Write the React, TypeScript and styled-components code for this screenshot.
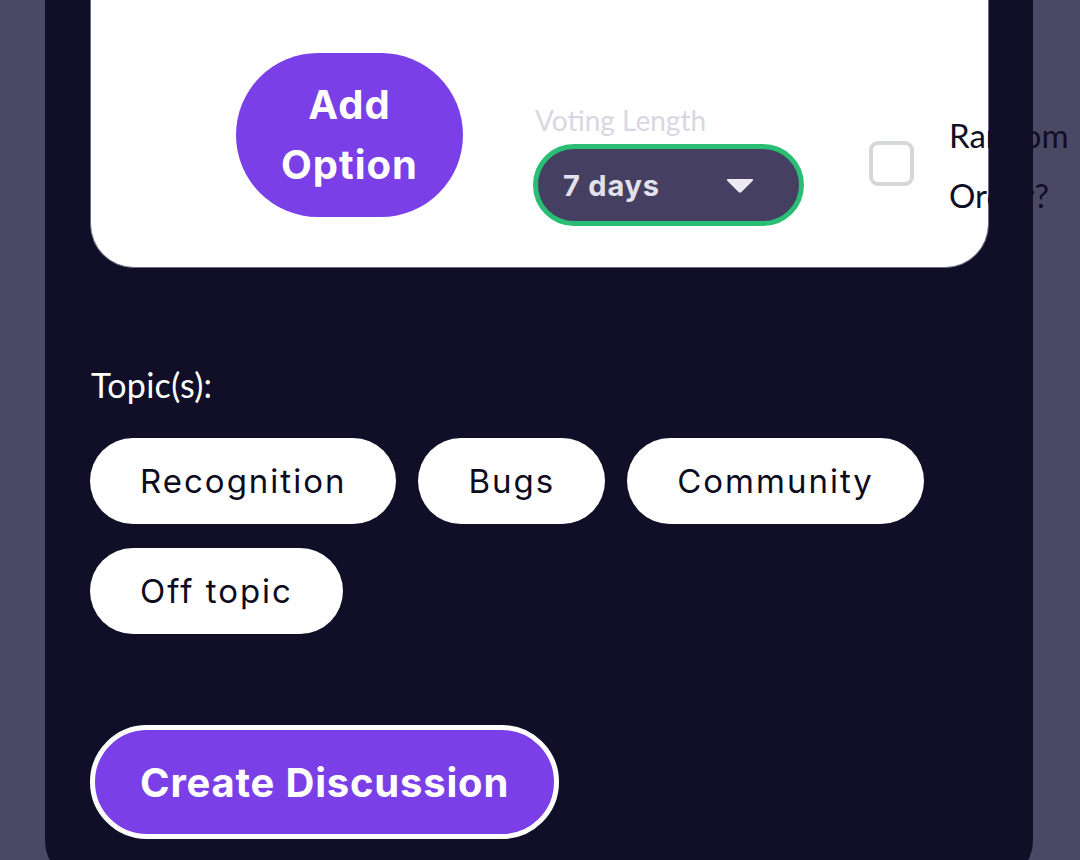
import React from "react";
import styled, { createGlobalStyle } from "styled-components";

const GlobalStyle = createGlobalStyle`
    html, body {
        margin: 0;
        padding: 0;
        background: #4b4866;
    }
    * {
        box-sizing: border-box;
    }
`;

const heading = `"Inter", "Noto Sans", sans-serif`;
const body = `"Lato", "Noto Sans", sans-serif`;

const Page = styled.div`
    height: 860px;
    overflow: hidden;
    background: #4b4866;
    padding: 0 47px 0 45px;
`;
const Panel = styled.main`
    min-height: 881px;
    background: #100f27;
    border-radius: 0 0 40px 40px;
    padding: 0 44px 0 45px;
`;
const Card = styled.section`
    height: 268px;
    background: #ffffff;
    border: 1px solid #6e6c82;
    border-top: none;
    border-radius: 0 0 44px 44px;
    display: flex;
    align-items: flex-start;
    padding-left: 145px;
`;
const AddBtn = styled.button`
    flex-shrink: 0;
    width: 227px;
    height: 164px;
    margin-top: 53px;
    border: none;
    border-radius: 82px;
    background: #7b3fe8;
    color: #ffffff;
    font-family: ${heading};
    font-size: 40px;
    font-weight: 700;
    letter-spacing: 1px;
    line-height: 60px;
    padding: 0;
`;
const VotingBox = styled.div`
    flex-shrink: 0;
    margin: 103px 0 0 70px;
    display: flex;
    flex-direction: column;
`;
const VotingLabel = styled.label`
    font-family: ${body};
    font-size: 28px;
    line-height: 35px;
    color: #d8d7e1;
    padding-left: 2px;
    margin-bottom: 6px;
`;
const Select = styled.div`
    width: 271px;
    height: 82px;
    border: 5px solid #2abd74;
    border-radius: 41px;
    background: #454061;
    display: flex;
    align-items: center;
    justify-content: space-between;
    padding: 0 44px 0 25px;
    font-family: ${heading};
    font-size: 29px;
    font-weight: 700;
    letter-spacing: 0.8px;
    color: #e3e2ec;
`;
const Checkbox = styled.span`
    flex-shrink: 0;
    width: 45px;
    height: 45px;
    margin: 141px 0 0 65px;
    border: 4px solid #d5d7db;
    border-radius: 9px;
`;
const CheckText = styled.span`
    flex-shrink: 0;
    width: 40px;
    margin: 105px 0 0 35px;
    font-family: ${body};
    font-size: 33px;
    line-height: 60px;
    color: #100f27;
`;
const TopicLabel = styled.h3`
    margin: 97px 0 0 1px;
    font-family: ${body};
    font-size: 34px;
    font-weight: 400;
    letter-spacing: 0.3px;
    line-height: 40px;
    color: #ffffff;
`;
const Chips = styled.div`
    display: flex;
    flex-wrap: wrap;
    gap: 24px 22px;
    margin-top: 33px;
    max-width: 880px;
`;
const Chip = styled.button`
    height: 86px;
    padding: 0 50px;
    border: none;
    border-radius: 43px;
    background: #ffffff;
    color: #0d0c1e;
    font-family: ${heading};
    font-size: 33px;
    font-weight: 400;
    letter-spacing: 2px;
`;
const CreateBtn = styled.button`
    margin-top: 91px;
    height: 114px;
    padding: 0 45px;
    border: 5px solid #ffffff;
    border-radius: 57px;
    background: #7b3fe8;
    color: #ffffff;
    font-family: ${heading};
    font-size: 40px;
    font-weight: 700;
    letter-spacing: 0.8px;
`;

const Caret = () => (
    <svg width="30" height="17" viewBox="0 0 30 17">
        <path d="M3 2 H27 Q29 2 27.5 4 L16.5 15 Q15 16.5 13.5 15 L2.5 4 Q1 2 3 2 Z" fill="#ece9f4" />
    </svg>
);

const topics = ["Recognition", "Bugs", "Community", "Off topic"];

function App() {
    return (
        <>
            <GlobalStyle />
            <Page>
                <Panel>
                    <Card>
                        <AddBtn>
                            Add
                            <br />
                            Option
                        </AddBtn>
                        <VotingBox>
                            <VotingLabel>Voting Length</VotingLabel>
                            <Select>
                                <span>7 days</span>
                                <Caret />
                            </Select>
                        </VotingBox>
                        <Checkbox />
                        <CheckText>Random Order?</CheckText>
                    </Card>
                    <TopicLabel>Topic(s):</TopicLabel>
                    <Chips>
                        {topics.map((t) => (
                            <Chip key={t}>{t}</Chip>
                        ))}
                    </Chips>
                    <CreateBtn>Create Discussion</CreateBtn>
                </Panel>
            </Page>
        </>
    );
}

export default App;
